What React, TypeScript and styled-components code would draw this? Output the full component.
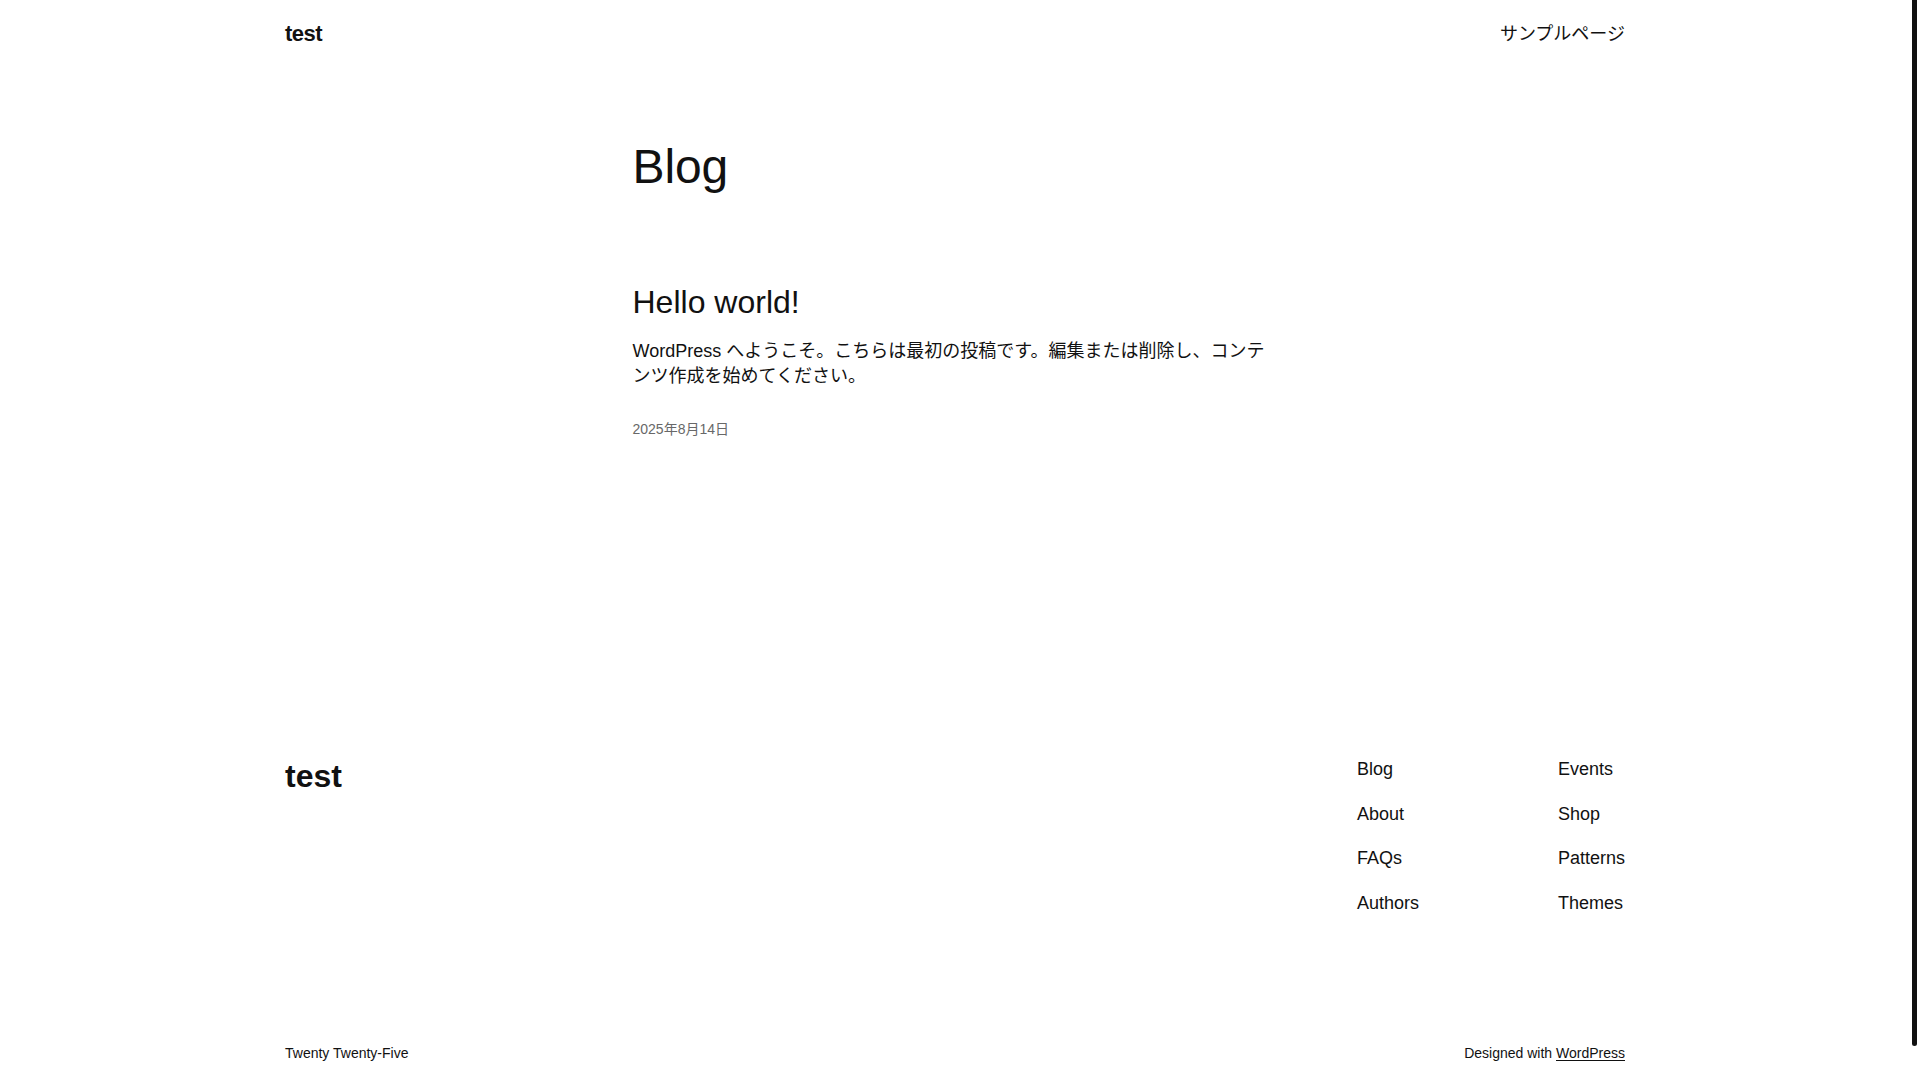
import styled, { createGlobalStyle } from "styled-components";

const GlobalStyle = createGlobalStyle`
  html, body {
    margin: 0;
    padding: 0;
    background: #ffffff;
  }

  body {
    padding-right: 10px;
    color: #111111;
    font-family: "Liberation Sans", "Noto Sans CJK JP", sans-serif;
    -webkit-font-smoothing: antialiased;
  }

  a {
    color: inherit;
    text-decoration: none;
  }
`;

// scrollbar thumb as it shows in the capture, laid over the right edge
const ScrollThumb = styled.div`
  position: fixed;
  top: 0;
  right: 3px;
  width: 5px;
  height: 1046px;
  background: #111111;
  border-radius: 0 0 3px 3px;
`;

const Wide = styled.div`
  max-width: 1340px;
  margin: 0 auto;
`;

const Header = styled(Wide)`
  display: flex;
  justify-content: space-between;
  align-items: center;
  padding: 19px 0;
`;

const SiteTitle = styled.a<{ $size: number; $spacing?: number }>`
  font-size: ${(p) => p.$size}px;
  font-weight: 700;
  line-height: ${(p) => (p.$size > 24 ? 1.2 : 1.4)};
  letter-spacing: ${(p) => p.$spacing ?? 0}px;
`;

const HeaderNav = styled.nav`
  font-size: 18px;
  line-height: 1.4;
`;

const Main = styled.main`
  max-width: 645px;
  margin: 0 auto;
  padding: 69px 0 160px;
`;

const PageTitle = styled.h1`
  margin: 0;
  font-size: 48px;
  font-weight: 400;
  line-height: 1.2;
  letter-spacing: -0.1px;
`;

const Post = styled.article`
  margin-top: 88px;
  display: flex;
  flex-direction: column;
`;

const PostTitle = styled.h2`
  margin: 0;
  font-size: 32px;
  font-weight: 400;
  line-height: 1.2;
`;

const Excerpt = styled.p`
  margin: 17px 0 0;
  font-size: 18px;
  line-height: 1.4;
`;

const PostDate = styled.time`
  margin-top: 31px;
  color: #686868;
  font-size: 14px;
  line-height: 1.4;
`;

const Footer = styled.footer`
  padding: 157px 0 55px;
`;

const FooterTop = styled(Wide)`
  display: flex;
  justify-content: space-between;
  align-items: flex-start;
`;

const FooterNavs = styled.div`
  display: flex;
  gap: 139px;
`;

const NavColumn = styled.nav`
  display: flex;
  flex-direction: column;
  gap: 19.6px;
  min-width: 62px;
`;

const NavLink = styled.a`
  font-size: 18px;
  line-height: 1.4;
`;

const FooterBottom = styled(Wide)`
  margin-top: 128px;
  display: flex;
  justify-content: space-between;
  font-size: 14px;
  line-height: 1.4;
`;

const Credit = styled.p`
  margin: 0;
`;

const CreditLink = styled.a`
  text-decoration: underline;
  text-underline-offset: 2px;
`;

const leftLinks = ["Blog", "About", "FAQs", "Authors"];
const rightLinks = ["Events", "Shop", "Patterns", "Themes"];

function App() {
  return (
    <>
      <GlobalStyle />

      <Header as="header">
        <SiteTitle href="#" $size={22} $spacing={-0.5}>
          test
        </SiteTitle>
        <HeaderNav>
          <a href="#">サンプルページ</a>
        </HeaderNav>
      </Header>

      <Main>
        <PageTitle>Blog</PageTitle>

        <Post>
          <PostTitle>
            <a href="#">Hello world!</a>
          </PostTitle>
          <Excerpt>
            WordPress へようこそ。こちらは最初の投稿です。編集または削除し、コンテンツ作成を始めてください。
          </Excerpt>
          <PostDate dateTime="2025-08-14">2025年8月14日</PostDate>
        </Post>
      </Main>

      <Footer>
        <FooterTop>
          <SiteTitle href="#" $size={32}>
            test
          </SiteTitle>

          <FooterNavs>
            <NavColumn>
              {leftLinks.map((label) => (
                <NavLink key={label} href="#">
                  {label}
                </NavLink>
              ))}
            </NavColumn>
            <NavColumn>
              {rightLinks.map((label) => (
                <NavLink key={label} href="#">
                  {label}
                </NavLink>
              ))}
            </NavColumn>
          </FooterNavs>
        </FooterTop>

        <FooterBottom>
          <Credit>Twenty Twenty-Five</Credit>
          <Credit>
            Designed with <CreditLink href="#">WordPress</CreditLink>
          </Credit>
        </FooterBottom>
      </Footer>

      <ScrollThumb />
    </>
  );
}

export default App;
